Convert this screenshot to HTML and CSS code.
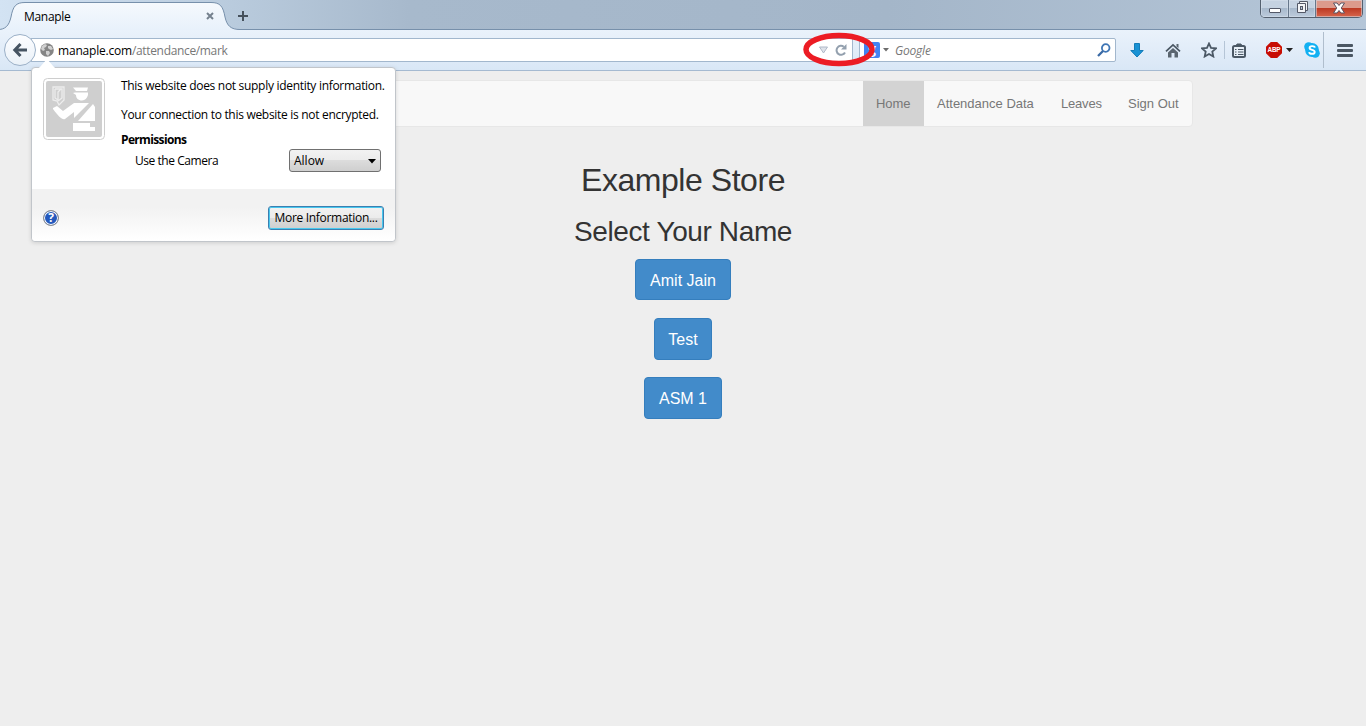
FILE: index.html
```html
<!DOCTYPE html>
<html lang="en">
<head>
<meta charset="utf-8">
<title>Manaple</title>
<link rel="stylesheet" href="styles.css">
</head>
<body>
<header class="titlebar">
  <div class="tab">
    <svg class="tab-shape" width="242" height="30" viewBox="0 0 242 30"><defs><linearGradient id="tg" x1="0" y1="0" x2="0" y2="1"><stop offset="0" stop-color="#f5f9fd"/><stop offset="1" stop-color="#e8f1fb"/></linearGradient></defs><path d="M0 30V29.500C7 29.500 11 26 13 17C15 6 18 2.500 27 2.500H213C222 2.500 225 6 227 17C229 26 233 29.500 242 29.500V30Z" fill="url(#tg)"/><path d="M0 29.500C7 29.500 11 26 13 17C15 6 18 2.500 27 2.500H213C222 2.500 225 6 227 17C229 26 233 29.500 242 29.500" fill="none" stroke="#7790ab"/></svg>
    <span class="tab-label">Manaple</span>
    <svg class="tab-close" width="8" height="8" viewBox="0 0 8 8"><path d="M1 1L7 7M7 1L1 7" stroke="#75818e" stroke-width="2"/></svg>
  </div>
  <svg class="newtab" width="12" height="12" viewBox="0 0 12 12"><path d="M6 1V11M1 6H11" stroke="#46515c" stroke-width="2"/></svg>
  <div class="winbtns">
    <span class="wb min"><svg width="14" height="7" viewBox="0 0 14 7"><rect x="1.500" y="1.500" width="11" height="4" rx=".5" fill="#fff" stroke="#545968"/></svg></span>
    <span class="wb max"><svg width="13" height="13" viewBox="0 0 13 13"><path d="M3.500 .5H11.500V9.500H3.500Z" fill="#f2f4f7" stroke="#545968"/><path d="M1.500 2.500H9.500V11.500H1.500Z" fill="#f2f4f7" stroke="#545968"/><rect x="4.500" y="5.500" width="2" height="3" fill="#b7c4d5" stroke="#545968"/></svg></span>
    <span class="wb close"><svg width="14" height="12" viewBox="0 0 14 12"><path d="M1.500 1H5L7 3.500L9 1H12.500L9.300 6L12.500 11H9L7 8.500L5 11H1.500L4.700 6Z" fill="#fff" stroke="#5b5260"/></svg></span>
  </div>
</header>
<div class="toolbar">
  <div class="back"><svg width="16" height="16" viewBox="0 0 16 16"><path d="M8.500 2L2.800 8L8.500 14M3 8H15" fill="none" stroke="#465462" stroke-width="3"/></svg></div>
  <div class="urlbar">
    <svg class="globe" width="14" height="14" viewBox="0 0 14 14"><circle cx="7" cy="7" r="6.800" fill="#858585"/><path d="M2 3L5 1L7 2L6 4L4 5L5 7L3 8L1 6ZM8 3L11 3L13 6L11 7L9 6L8 5ZM6 8L9 8L10 10L8 13L6 11Z" fill="#d0d0d0"/></svg>
    <span class="url"><b>manaple.com</b>/attendance/mark</span>
    <svg class="drop" width="9" height="8" viewBox="0 0 9 8"><path d="M.5 1H8.500L4.500 7Z" fill="#dfe3ea" stroke="#b0b9c8"/></svg>
    <svg class="reload" width="12" height="12" viewBox="0 0 12 12"><path d="M10 8.500A4.500 4.500 0 1 1 8.800 2.700" fill="none" stroke="#93a0ae" stroke-width="2"/><path d="M11.500 0V5.500H6Z" fill="#93a0ae"/></svg>
  </div>
  <div class="search">
    <span class="google">g</span><svg class="caret" width="6" height="4" viewBox="0 0 6 4"><path d="M0 0H6L3 3.500Z" fill="#6c6c6c"/></svg>
    <i class="placeholder">Google</i>
    <svg class="mag" width="14" height="14" viewBox="0 0 14 14"><circle cx="8.700" cy="5" r="3.800" fill="none" stroke="#3f76b5" stroke-width="1.800"/><path d="M6 8L1 13" stroke="#3a6aa5" stroke-width="2.300"/></svg>
  </div>
  <div class="icons">
    <svg class="ic-down" width="14" height="15" viewBox="0 0 14 15"><path d="M4.500 .5H9.500V7.500H13.200L7 14L.8 7.500H4.500Z" fill="#1992d4" stroke="#137cb9"/></svg>
    <svg class="ic-home" width="16" height="15" viewBox="0 0 16 15"><path d="M1 8.300L8 1.800L15 8.300" fill="none" stroke="#4a5763" stroke-width="1.700"/><path d="M11.500 1H13.500V5L11.500 3.500ZM3 9.500L8 5L13 9.500V14.500H9.500V10H6.500V14.500H3Z" fill="#5b6670"/></svg>
    <svg class="ic-star" width="16" height="16" viewBox="0 0 16 16"><path d="M8 1.500L10 5.900L15 6.400L11.300 9.700L12.300 14.500L8 12L3.700 14.500L4.700 9.700L1 6.400L6 5.900Z" fill="none" stroke="#4b5865" stroke-width="1.800"/></svg>
    <span class="mini"></span>
    <svg class="ic-list" width="14" height="15" viewBox="0 0 14 15"><rect x="1" y="3" width="12" height="11" rx="1.500" fill="#e7eff7" stroke="#4b5865" stroke-width="2"/><path d="M4 3L5 1H9L10 3Z" fill="#4b5865" stroke="#4b5865"/><path d="M3 6.500H4.500M6 6.500H11.500M3 9H4.500M6 9H11.500M3 11.500H4.500M6 11.500H11.500" stroke="#4b5865"/></svg>
    <span class="abp"><span>ABP</span></span>
    <svg class="ic-caret" width="7" height="4" viewBox="0 0 7 4"><path d="M0 0H7L3.500 4Z" fill="#222"/></svg>
    <span class="skype"><svg width="16" height="16" viewBox="0 0 16 16"><circle cx="8" cy="8" r="6.900" fill="#12b0f2"/><circle cx="4.700" cy="4.700" r="4.500" fill="#12b0f2"/><circle cx="11.300" cy="11.300" r="4.500" fill="#12b0f2"/><path d="M10.800 5.600C10.500 3.600 5.600 3.500 5.600 5.900C5.600 8.500 10.700 7.200 10.700 9.900C10.700 12.500 5.400 12.300 5.200 10.100" fill="none" stroke="#fff" stroke-width="1.900"/></svg></span>
    <span class="divider"></span>
    <span class="menu"><span></span><span></span><span></span></span>
  </div>
</div>
<main class="page">
  <nav class="nav"><a class="active n1">Home</a><a class="n2">Attendance Data</a><a class="n3">Leaves</a><a class="n4">Sign Out</a></nav>
  <h1 class="store">Example Store</h1>
  <h2 class="select">Select Your Name</h2>
  <div class="names"><button class="b1"><span>Amit Jain</span></button><button class="b2"><span>Test</span></button><button class="b3"><span>ASM 1</span></button></div>
</main>
<aside class="popup">
  <svg class="arrow" width="20" height="10" viewBox="0 0 20 10"><path d="M0 10C3 9 7 3 10 0C13 3 17 9 20 10Z" fill="#fff"/></svg>
  <div class="info">
    <svg class="officer" width="62" height="62" viewBox="0 0 62 62"><rect x=".5" y=".5" width="61" height="61" rx="4" fill="#fff" stroke="#cecece"/><rect x="3" y="3" width="56" height="56" rx="2" fill="#cfcfcf"/><path d="M30 9.500H45L44 13H33ZM32 14.500H45V17C44 20 42 22.500 39 22.500C35 22.500 33 20 33 17L30 15ZM10 30L14 28L20 33L31 25H46L31 40V34L22 41C19 42 16 39 10 31ZM50 26L52 29V43H35ZM30 45H47V49H52V53H30Z" fill="#fff"/><path d="M10 9H21V22L16 27L14 23L10 22ZM12 11V20L15 22V14L18 11M12 11H19V20L15 23" fill="none" stroke="#ededed" stroke-width="1.300"/></svg>
    <div class="copy">
      <p class="p1">This website does not supply identity information.</p>
      <p class="p2">Your connection to this website is not encrypted.</p>
      <p class="p3">Permissions</p>
      <div class="permission"><span class="p4">Use the Camera</span><span class="allow"><span>Allow</span><svg width="8" height="5" viewBox="0 0 8 5"><path d="M0 0H8L4 4.500Z" fill="#000"/></svg></span></div>
    </div>
  </div>
  <div class="foot"><span class="help">?</span><button class="more"><span>More Information...</span></button></div>
</aside>
<svg class="ring" width="74" height="36" viewBox="0 0 74 36"><ellipse cx="37" cy="17.500" rx="33" ry="14" fill="none" stroke="#ec1c24" stroke-width="5.500"/></svg>
</body>
</html>
```
FILE: styles.css
```css
* { box-sizing: border-box; }
body { margin: 0; width: 1366px; height: 726px; overflow: hidden; background: #eee; font: 12px "Open Sans", sans-serif; position: relative; }
svg { display: block; flex: none; }
.titlebar { height: 30px; display: flex; background: linear-gradient(90deg, #d3e3f3, #b9cbdd 17%, #a7b9cc 30%, #a4b6c9 65%, #b5c6d8); border-bottom: 1px solid #7790ab; }
.tab { width: 242px; height: 30px; position: relative; display: flex; padding: 8px 0 0 26px; margin-left: -2px; }
.tab-shape { position: absolute; left: 0; top: 0; }
.tab-label { position: relative; width: 182px; line-height: 17px; letter-spacing: -.3px; }
.tab-close { position: relative; margin-top: 4px; }
.newtab { margin: 10px 0 0 -3px; }
.winbtns { margin-left: auto; margin-right: 3px; display: flex; height: 18px; border: 1px solid #54606f; border-top: 0; border-radius: 0 0 5px 5px; overflow: hidden; }
.wb { display: flex; align-items: center; justify-content: center; width: 28px; background: linear-gradient(#c5d2e1 50%, #a8b9cc 50%, #bccbdc); border-right: 1px solid #66778b; box-shadow: inset 0 0 0 1px #d7e1ec88; }
.wb.max { width: 27px; padding-bottom: 2px; }
.wb.min { padding-top: 3px; }
.wb.close { width: 46px; padding-bottom: 2px; background: linear-gradient(#dc9a8c 45%, #bd3a24 50%, #d7664c); border: 0; }
.toolbar { height: 41px; display: flex; background: linear-gradient(#eaf2fb, #d9e7f6); border-bottom: 1px solid #a5bad1; position: relative; }
.back { width: 32px; height: 32px; margin: 4px 0 0 4px; border: 1px solid #9bb0c7; border-radius: 50%; background: linear-gradient(#fcfdff, #eaf1f8); display: flex; align-items: center; justify-content: center; position: relative; z-index: 1; }
.urlbar { width: 822px; height: 24px; margin: 8px 0 0 -5px; border: 1px solid #a2b7cd; background: #fff; display: flex; align-items: center; padding-left: 8px; }
.url { margin-left: 4px; color: #777; letter-spacing: -.34px; width: 761px; line-height: 20px; padding-top: 2px; }
.url b { font-weight: 400; color: #000; letter-spacing: -.2px; }
.reload { margin-left: 7px; }
.search { width: 257px; height: 24px; margin: 8px 0 0 6px; border: 1px solid #a2b7cd; border-radius: 0 2px 2px 0; background: #fff; display: flex; align-items: center; }
.google { width: 16px; height: 16px; margin-left: 4px; border-radius: 2px; background: #4284f3; color: #fff; font: bold 14px/13px "Open Sans", sans-serif; text-align: center; }
.caret { margin-left: 3px; }
.placeholder { margin-left: 6px; color: #777; width: 202px; line-height: 20px; padding-top: 1px; letter-spacing: -.2px; }
.icons { display: flex; align-items: center; height: 40px; margin-left: 14px; }
.ic-home { margin-left: 21px; }
.ic-star { margin-left: 20px; }
.mini { width: 1px; height: 18px; margin: 0 7px; background: #b5c5d6; }
.abp { margin-left: 20px; width: 16px; height: 16px; background: #c70d03; clip-path: polygon(30% 0,70% 0,100% 30%,100% 70%,70% 100%,30% 100%,0 70%,0 30%); color: #fff; font: bold 8px/16px "Liberation Sans", sans-serif; letter-spacing: -.3px; display: flex; justify-content: center; }
.abp span { transform: scaleX(.8); }
.ic-caret { margin-left: 4px; }
.skype { margin-left: 11px; }
.divider { width: 1px; height: 36px; margin: 0 13px 0 3px; background: #b0becd; }
.menu { display: flex; flex-direction: column; gap: 2px; }
.menu span { width: 16px; height: 3px; border-radius: 1px; background: #4b5763; }
.page { display: flex; flex-direction: column; align-items: center; padding-top: 9px; font-family: "Liberation Sans", Arial, sans-serif; color: #333; }
.nav { width: 1020px; height: 47px; border: 1px solid #e7e7e7; border-radius: 4px; background: #f8f8f8; display: flex; justify-content: flex-end; font-size: 13px; color: #777; line-height: 45px; }
.nav a { padding-left: 13px; white-space: nowrap; }
.nav .active { background: #d3d3d3; letter-spacing: -.1px; }
.n1 { width: 61px; } .n2 { width: 124px; } .n3 { width: 67px; letter-spacing: -.2px; } .n4 { width: 77px; }
.store { margin: 35px 0 0; font-size: 32px; line-height: 36px; font-weight: 400; letter-spacing: -.45px; }
.select { margin: 19px 0 0; font-size: 28px; line-height: 30px; font-weight: 400; letter-spacing: -.38px; }
.names { display: flex; flex-direction: column; align-items: center; margin-top: 12px; }
.names button { height: 42px; margin-bottom: 17px; border: 1px solid #357ebd; border-radius: 4px; background: #428bca; color: #fff; font: 16px "Liberation Sans", sans-serif; padding: 1px 0 0; }
.names .b1 { width: 96px; height: 41px; margin-bottom: 18px; padding-top: 2px; }
.b2 { width: 58px; } .b3 { width: 78px; }
.popup { position: absolute; left: 31px; top: 67px; width: 365px; height: 175px; background: #fff; border: 1px solid #c1c5ca; border-radius: 4px; box-shadow: 0 1px 4px #0002; }
.arrow { position: absolute; left: 5px; top: -9px; }
.info { display: flex; padding: 10px 0 0 11px; height: 121px; }
.copy { margin-left: 16px; width: 265px; line-height: 16px; white-space: nowrap; }
.copy p { margin: 0; letter-spacing: -.3px; }
.copy .p2 { margin-top: 13px; }
.copy .p3 { margin-top: 9px; font-weight: 700; letter-spacing: -.65px; }
.permission { display: flex; justify-content: space-between; align-items: center; padding: 0 5px 0 14px; margin-top: 1px; }
.p4 { letter-spacing: -.45px; padding-top: 1px; }
.allow { display: flex; align-items: center; justify-content: space-between; width: 92px; height: 23px; border: 1px solid #707070; border-radius: 3px; background: linear-gradient(#f2f2f2, #ebebeb 50%, #dcdcdc 50%, #cfcfcf); padding: 1px 4px 0; }
.foot { height: 52px; border-radius: 0 0 4px 4px; background: linear-gradient(#f2f2f2 35%, #fff); display: flex; justify-content: space-between; align-items: center; padding: 5px 11px 0; }
.help { width: 16px; height: 16px; border: 1px solid #909090; box-shadow: inset 0 0 0 1px #fff; border-radius: 50%; background: #2459bd; color: #fff; font: bold 12px/14px "Open Sans", sans-serif; text-align: center; }
.more { width: 116px; height: 24px; border: 1px solid #3c7fb1; border-radius: 3px; box-shadow: inset 0 0 0 1px #48c8ee; background: linear-gradient(#f2f2f2, #ebebeb 50%, #dcdcdc 50%, #cfcfcf); font: 12px "Open Sans", sans-serif; padding: 0; white-space: nowrap; color: #000; letter-spacing: -.3px; }
.ring { position: absolute; left: 802px; top: 32px; }
```
